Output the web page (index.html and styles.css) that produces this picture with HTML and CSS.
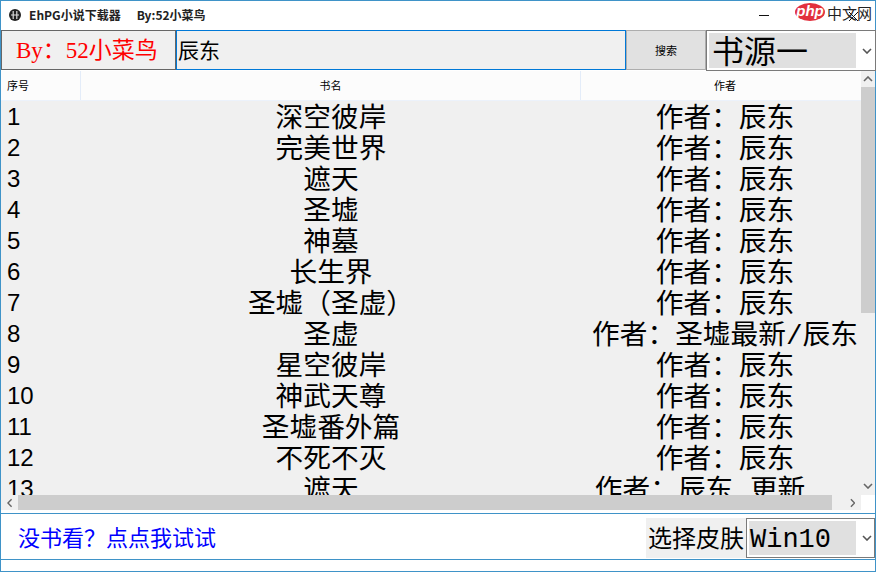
FILE: index.html
```html
<!DOCTYPE html>
<html lang="zh">
<head>
<meta charset="utf-8">
<title>EhPG小说下载器</title>
<link rel="stylesheet" href="styles.css">
</head>
<body>
<div class="window">
  <header class="titlebar">
    <svg class="app-icon" width="12" height="12" viewBox="0 0 12 12"><circle cx="6" cy="6" r="6" fill="#222"/><path d="M4.2 2v8M7.8 2v8M2 6h8" stroke="#ddd" stroke-width="1.2"/></svg>
    <span class="title-main">EhPG小说下载器</span>
    <span class="title-by">By:52小菜鸟</span>
    <span class="title-spacer"></span>
    <span class="min-btn"></span>
    <svg class="close-btn" width="9" height="9" viewBox="0 0 9 9"><path d="M0 0l9 9M9 0L0 9" stroke="#111" stroke-width="1"/></svg>
  </header>
  <div class="toolbar">
    <div class="brand">By：52小菜鸟</div>
    <div class="search-input">辰东</div>
    <div class="search-btn">搜索</div>
    <div class="combo source"><span class="combo-val">书源一</span><svg class="chev" width="10" height="6" viewBox="0 0 10 6"><path d="M1 1l4 4 4-4" fill="none" stroke="#555" stroke-width="1.6"/></svg></div>
  </div>
  <div class="table-wrap">
    <div class="table-main">
      <div class="thead">
        <div class="th c1">序号</div><div class="th c2">书名</div><div class="th c3">作者</div>
      </div>
      <div class="tbody">
        <div class="tr"><div class="c1">1</div><div class="c2">深空彼岸</div><div class="c3">作者：辰东</div></div>
        <div class="tr"><div class="c1">2</div><div class="c2">完美世界</div><div class="c3">作者：辰东</div></div>
        <div class="tr"><div class="c1">3</div><div class="c2">遮天</div><div class="c3">作者：辰东</div></div>
        <div class="tr"><div class="c1">4</div><div class="c2">圣墟</div><div class="c3">作者：辰东</div></div>
        <div class="tr"><div class="c1">5</div><div class="c2">神墓</div><div class="c3">作者：辰东</div></div>
        <div class="tr"><div class="c1">6</div><div class="c2">长生界</div><div class="c3">作者：辰东</div></div>
        <div class="tr"><div class="c1">7</div><div class="c2">圣墟（圣虚）</div><div class="c3">作者：辰东</div></div>
        <div class="tr"><div class="c1">8</div><div class="c2">圣虚</div><div class="c3">作者：圣墟最新/辰东</div></div>
        <div class="tr"><div class="c1">9</div><div class="c2">星空彼岸</div><div class="c3">作者：辰东</div></div>
        <div class="tr"><div class="c1">10</div><div class="c2">神武天尊</div><div class="c3">作者：辰东</div></div>
        <div class="tr"><div class="c1">11</div><div class="c2">圣墟番外篇</div><div class="c3">作者：辰东</div></div>
        <div class="tr"><div class="c1">12</div><div class="c2">不死不灭</div><div class="c3">作者：辰东</div></div>
        <div class="tr"><div class="c1">13</div><div class="c2">遮天</div><div class="c3 keep-space">作者：辰东 更新   </div></div>
      </div>
      <div class="hscroll">
        <svg width="6" height="10" viewBox="0 0 6 10"><path d="M5 1L1 5l4 4" fill="none" stroke="#666" stroke-width="1.6"/></svg>
        <div class="hthumb"></div>
        <svg width="6" height="10" viewBox="0 0 6 10"><path d="M1 1l4 4-4 4" fill="none" stroke="#666" stroke-width="1.6"/></svg>
      </div>
    </div>
    <div class="vscroll">
      <svg class="v-up" width="10" height="6" viewBox="0 0 10 6"><path d="M1 5l4-4 4 4" fill="none" stroke="#666" stroke-width="1.6"/></svg>
      <div class="vthumb"></div>
      <svg class="v-down" width="10" height="6" viewBox="0 0 10 6"><path d="M1 1l4 4 4-4" fill="none" stroke="#666" stroke-width="1.6"/></svg>
    </div>
  </div>
  <div class="footer">
    <div class="link">没书看？点点我试试</div>
    <div class="skin-label">选择皮肤</div>
    <div class="combo skin"><span class="combo-val">Win10</span><svg class="chev" width="10" height="6" viewBox="0 0 10 6"><path d="M1 1l4 4 4-4" fill="none" stroke="#555" stroke-width="1.6"/></svg></div>
  </div>
  <div class="status"></div>
</div>
<div class="watermark"><span class="wm-php">php</span><span class="wm-cn">中文网</span></div>
</body>
</html>
```
FILE: styles.css
```css
* { box-sizing: border-box; }
html, body { margin: 0; padding: 0; }
body { width: 876px; height: 572px; overflow: hidden; position: relative; font-family: "Noto Sans CJK SC", "Liberation Sans", sans-serif; color: #000; background: #fff; }
.window { width: 876px; height: 572px; border: 1px solid #3f93c8; border-bottom: 0; display: flex; flex-direction: column; background: #fff; }
.titlebar { height: 29px; display: flex; align-items: center; padding: 0 0 2px 8px; font-size: 12px; font-weight: 700; color: #222; flex: none; }
.app-icon { flex: none; margin-right: 8px; }
.title-main { margin-right: 16px; }
.title-spacer { flex: 1; }
.min-btn { width: 10px; height: 1px; background: #111; margin-right: 80px; margin-top: 2px; }
.close-btn { margin-right: 17px; margin-top: 4px; }
.toolbar { height: 41px; display: flex; flex: none; }
.brand { width: 175px; height: 40px; flex: none; border: 1px solid #666; background: #f0f0f0; color: #ff0000; font-family: "Liberation Serif", "Noto Sans CJK SC", serif; font-size: 23px; line-height: 39px; padding-left: 14px; white-space: nowrap; }
.search-input { width: 450px; height: 40px; flex: none; border: 1px solid #0078d7; background: #f0f0f0; font-size: 21px; line-height: 36px; padding-left: 1px; }
.search-btn { width: 80px; height: 40px; flex: none; border: 1px solid #adadad; background: #e1e1e1; font-size: 11px; line-height: 38px; text-align: center; }
.combo { border: 1px solid #7a7a7a; background: #fff; display: flex; align-items: center; padding: 2px; flex: none; }
.source { width: 170px; height: 41px; }
.combo-val { display: block; flex: none; background: #e0e0e0; height: 100%; }
.source .combo-val { width: 147px; font-size: 32px; line-height: 33px; padding-left: 3px; }
.chev { margin-left: 6px; flex: none; }
.table-wrap { height: 439px; display: flex; flex: none; }
.table-main { width: 860px; display: flex; flex-direction: column; background: #f0f0f0; overflow: hidden; }
.thead { height: 30px; display: flex; background: #fcfcfc; border-bottom: 1px solid #ecf2fb; flex: none; font-size: 11px; }
.th { line-height: 28px; text-align: center; border-right: 1px solid #e3ecf9; }
.th.c1 { text-align: left; padding-left: 6px; }
.th.c3 { border-right: 0; }
.c1 { width: 80px; flex: none; }
.c2 { width: 500px; flex: none; text-align: center; }
.c3 { width: 288px; flex: none; text-align: center; white-space: nowrap; }
.c3.keep-space { white-space: pre; }
.tbody { flex: 1; min-height: 0; overflow: hidden; font-size: 27.7px; }
.tr { height: 31px; display: flex; line-height: 31px; }
.tr .c2, .tr .c3 { font-family: "Liberation Mono", "Noto Sans CJK SC", monospace; padding-top: 3px; }
.tr .c1 { padding-left: 6px; font-family: "Liberation Sans", sans-serif; font-size: 24px; }
.hscroll { height: 15px; flex: none; display: flex; align-items: center; background: #f0f0f0; padding: 0 6px; }
.hthumb { width: 814px; height: 15px; margin: 0 18px 0 5px; background: #cdcdcd; flex: none; }
.vscroll { width: 14px; height: 424px; flex: none; display: flex; flex-direction: column; align-items: center; background: #f0f0f0; }
.v-up { margin: 5px 0 5px; flex: none; }
.vthumb { width: 14px; height: 226px; background: #cdcdcd; flex: none; }
.v-down { margin-top: auto; margin-bottom: 6px; }
.footer { height: 47px; flex: none; border-top: 1px solid #3f93c8; border-bottom: 1px solid #3f93c8; margin-top: 3px; display: flex; align-items: center; padding: 4px 0 1px 17px; }
.link { color: #0000ff; font-size: 22px; line-height: 30px; padding-bottom: 4px; flex: 1; }
.skin-label { width: 100px; height: 40px; background: #f0f0f0; font-size: 24px; line-height: 38px; text-align: center; white-space: nowrap; }
.skin { width: 129px; height: 40px; }
.skin .combo-val { width: 107px; font-family: "Liberation Mono", monospace; font-size: 27px; line-height: 38px; padding-left: 1px; }
.status { height: 12px; border-bottom: 1px solid #3f93c8; flex: none; }
.watermark { position: absolute; left: 795px; top: 2px; height: 20px; display: flex; align-items: center; }
.wm-php { background: #e2303d; color: #fff; font-family: "Liberation Sans", sans-serif; font-style: italic; font-weight: 700; font-size: 15px; width: 30px; height: 18px; line-height: 15px; border-radius: 50%; text-align: center; }
.wm-cn { color: #222; font-size: 15px; margin-left: 2px; white-space: nowrap; }
```
